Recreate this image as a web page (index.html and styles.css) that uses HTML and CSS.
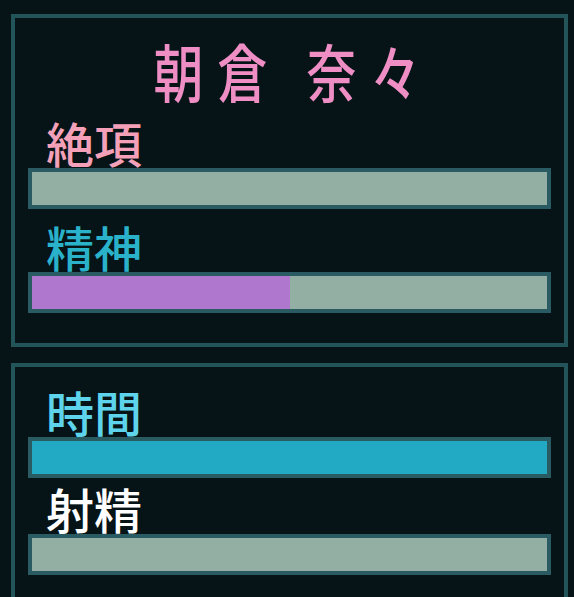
FILE: index.html
```html
<!DOCTYPE html>
<html lang="ja">
<head>
    <meta charset="UTF-8">
    <meta name="viewport" content="width=device-width, initial-scale=1.0">
    <title>ステータス</title>
    <link rel="stylesheet" href="styles.css">
</head>
<body>
    <div class="container">
        <div class="panel panel-main">
            <div class="name"><span>朝倉 奈々</span></div>
            <div class="stats">
                <div class="stat">
                    <div class="stat-label pink">絶項</div>
                    <div class="bar"><div class="fill" style="width: 0%"></div></div>
                </div>
                <div class="stat">
                    <div class="stat-label teal">精神</div>
                    <div class="bar"><div class="fill purple" style="width: 50%"></div></div>
                </div>
            </div>
        </div>
        <div class="panel panel-sub">
            <div class="stats">
                <div class="stat">
                    <div class="stat-label cyan">時間</div>
                    <div class="bar"><div class="fill blue" style="width: 100%"></div></div>
                </div>
                <div class="stat">
                    <div class="stat-label white">射精</div>
                    <div class="bar"><div class="fill" style="width: 0%"></div></div>
                </div>
            </div>
        </div>
    </div>
</body>
</html>
```

FILE: styles.css
```css
html, body {
    height: 100%;
}
body {
    font-family: "Noto Sans CJK JP", "Noto Sans", sans-serif;
    background-color: #061417;
    margin: 0;
    overflow: hidden;
}
.container {
    display: flex;
    flex-direction: column;
    gap: 16px;
    padding: 14px 6px 0 11px;
}
.panel {
    border: 4px solid #23545a;
    box-sizing: border-box;
    padding: 0 13px;
}
.panel-main {
    height: 333px;
    padding-top: 27px;
}
.panel-sub {
    height: 260px;
    padding-top: 20px;
}
.name {
    height: 50px;
    text-align: center;
    padding-left: 9px;
    margin-bottom: 23px;
}
.name span {
    display: inline-block;
    font-size: 50px;
    line-height: 48px;
    font-weight: 500;
    letter-spacing: 14px;
    color: #ee8ec4;
    transform: scaleY(1.26);
}
.stats {
    display: flex;
    flex-direction: column;
    gap: 13px;
}
.panel-sub .stats {
    gap: 6px;
}
.stat-label {
    height: 50px;
    font-size: 48px;
    line-height: 48px;
    font-weight: 500;
    padding-left: 18px;
}
.pink {
    color: #f4a0b8;
}
.teal {
    color: #2ab2ca;
}
.cyan {
    color: #5ed4ec;
}
.white {
    color: #ffffff;
}
.bar {
    height: 41px;
    box-sizing: border-box;
    border: 4px solid #2b5b62;
    background: #93aea3;
}
.fill {
    height: 100%;
}
.purple {
    background: #b077cf;
}
.blue {
    background: #22a9c4;
}
```
